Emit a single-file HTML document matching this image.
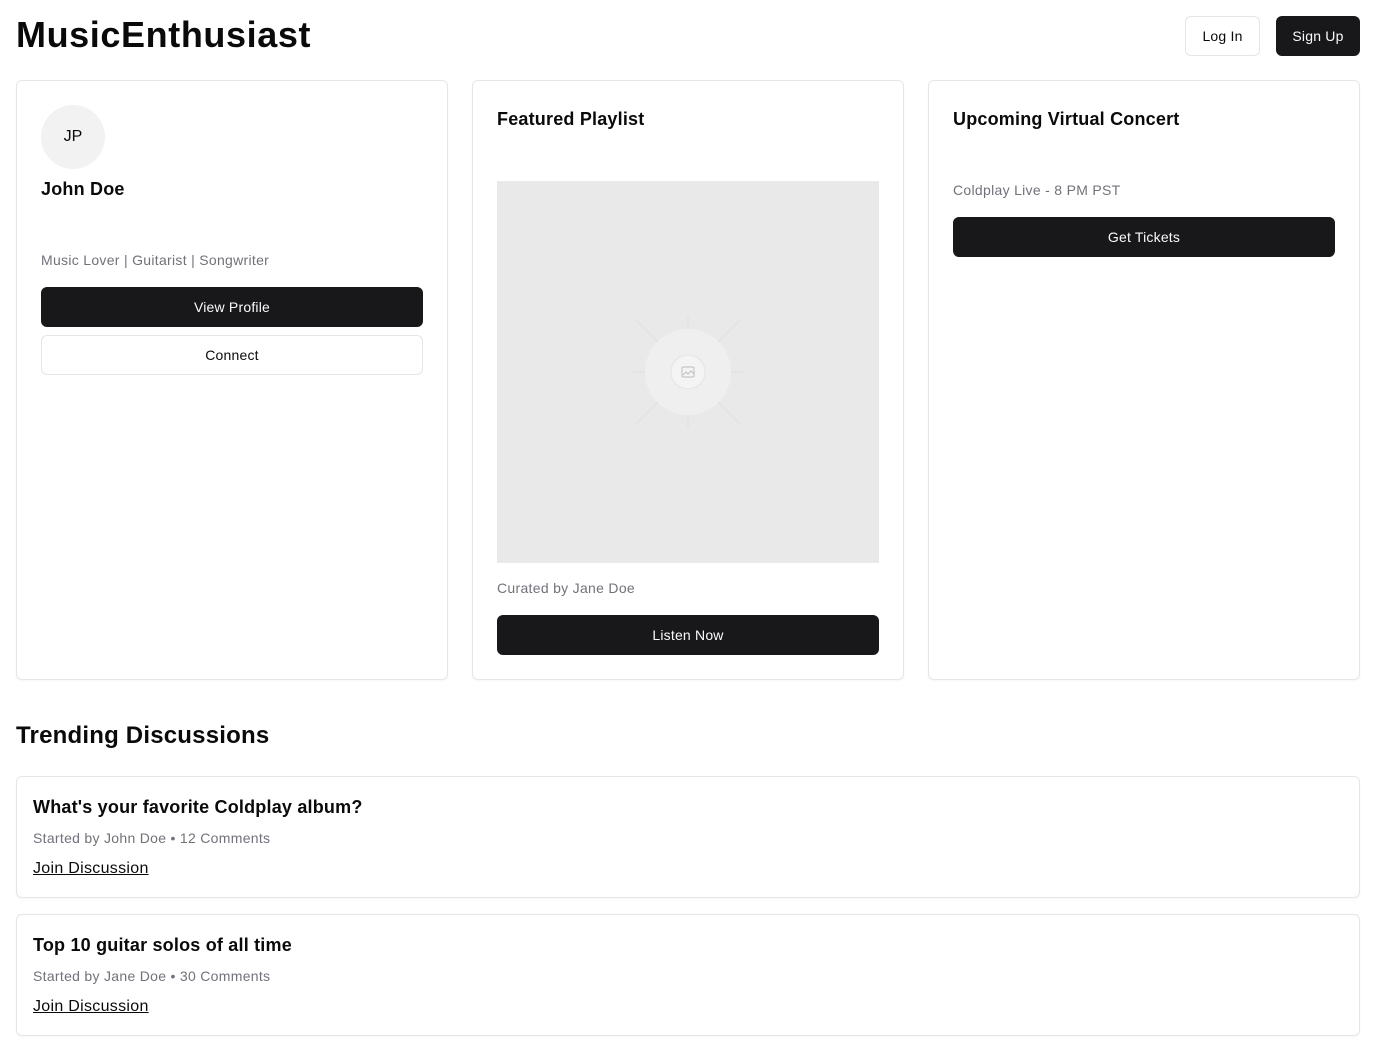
<!DOCTYPE html>
<html><head><meta charset="utf-8"><style>
*{box-sizing:border-box;margin:0;padding:0}
body{width:1376px;height:1052px;background:#fff;font-family:"Liberation Sans",sans-serif;color:#0a0a0a;position:relative;overflow:hidden}
.a{position:absolute;white-space:nowrap}
.card{position:absolute;border:1px solid #e5e5e5;border-radius:6px;box-shadow:0 1px 2px rgba(0,0,0,.04)}
.btn{position:absolute;border-radius:6px;font-size:14px;display:flex;align-items:center;justify-content:center;letter-spacing:0.2px}
.dark{background:#18181b;color:#fafafa}
.light{background:#fff;border:1px solid #e5e5e5;color:#0a0a0a}
.muted{color:#71717a;font-size:14px;letter-spacing:0.3px}
h3{font-size:18px;font-weight:bold;letter-spacing:0.2px}
</style></head><body>
<div class="a" style="left:16px;top:14px;font-size:36px;font-weight:bold;letter-spacing:0.6px">MusicEnthusiast</div>
<div class="btn light" style="left:1185px;top:16px;width:75px;height:40px">Log In</div>
<div class="btn dark" style="left:1276px;top:16px;width:84px;height:40px">Sign Up</div>

<div class="card" style="left:16px;top:80px;width:432px;height:600px"></div>
<div class="a" style="left:41px;top:105px;width:64px;height:64px;border-radius:50%;background:#f2f2f2;display:flex;align-items:center;justify-content:center;font-size:16px">JP</div>
<h3 class="a" style="left:41px;top:179px">John Doe</h3>
<div class="a muted" style="left:41px;top:252px">Music Lover | Guitarist | Songwriter</div>
<div class="btn dark" style="left:41px;top:287px;width:382px;height:40px">View Profile</div>
<div class="btn light" style="left:41px;top:335px;width:382px;height:40px">Connect</div>

<div class="card" style="left:472px;top:80px;width:432px;height:600px"></div>
<h3 class="a" style="left:497px;top:109px">Featured Playlist</h3>
<div class="a" style="left:497px;top:181px;width:382px;height:382px;background:#e9e9e9">
<svg width="382" height="382" viewBox="0 0 382 382">
<g stroke="#e2e2e2" stroke-width="1.5" fill="none">
<line x1="191" y1="135" x2="191" y2="247"/><line x1="135" y1="191" x2="247" y2="191"/>
<line x1="138" y1="138" x2="244" y2="244"/><line x1="244" y1="138" x2="138" y2="244"/>
</g>
<circle cx="191" cy="191" r="43" fill="#efefef"/>
<circle cx="191" cy="191" r="17" fill="#f4f4f4" stroke="#e4e4e4"/>
<rect x="185" y="186" width="12" height="10" rx="1" fill="none" stroke="#bdbdbd"/>
<path d="M186 194l3-3 2 2 3-3 3 3" fill="none" stroke="#bdbdbd"/>
</svg></div>
<div class="a muted" style="left:497px;top:580px">Curated by Jane Doe</div>
<div class="btn dark" style="left:497px;top:615px;width:382px;height:40px">Listen Now</div>

<div class="card" style="left:928px;top:80px;width:432px;height:600px"></div>
<h3 class="a" style="left:953px;top:109px">Upcoming Virtual Concert</h3>
<div class="a muted" style="left:953px;top:182px">Coldplay Live - 8 PM PST</div>
<div class="btn dark" style="left:953px;top:217px;width:382px;height:40px">Get Tickets</div>

<div class="a" style="left:16px;top:722px;font-size:24px;font-weight:bold;letter-spacing:0.2px">Trending Discussions</div>

<div class="card" style="left:16px;top:776px;width:1344px;height:122px"></div>
<h3 class="a" style="left:33px;top:797px">What's your favorite Coldplay album?</h3>
<div class="a muted" style="left:33px;top:830px">Started by John Doe • 12 Comments</div>
<div class="a" style="left:33px;top:860px;font-size:16px;text-decoration:underline;letter-spacing:0.3px">Join Discussion</div>

<div class="card" style="left:16px;top:914px;width:1344px;height:122px"></div>
<h3 class="a" style="left:33px;top:935px">Top 10 guitar solos of all time</h3>
<div class="a muted" style="left:33px;top:968px">Started by Jane Doe • 30 Comments</div>
<div class="a" style="left:33px;top:998px;font-size:16px;text-decoration:underline;letter-spacing:0.3px">Join Discussion</div>
</body></html>
